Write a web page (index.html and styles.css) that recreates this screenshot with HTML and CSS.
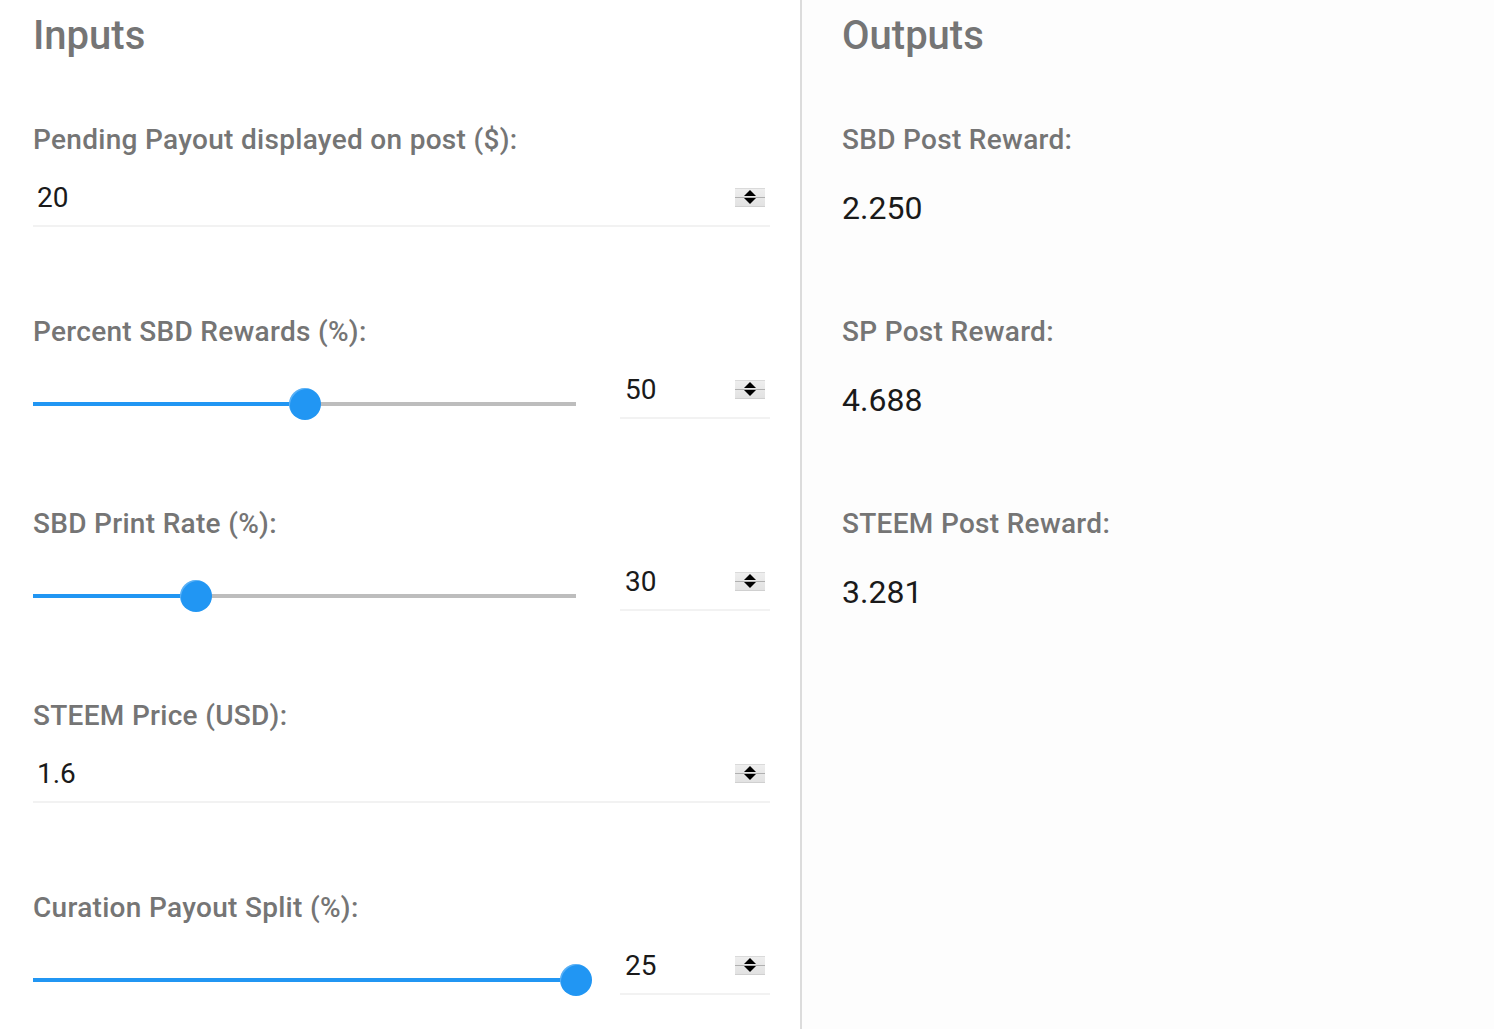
FILE: index.html
```html
<!DOCTYPE html>
<html>
<head>
<meta charset="utf-8">
<link rel="stylesheet" href="styles.css">
</head>
<body>
<div class="page">
  <section class="col inputs">
    <h2 class="heading">Inputs</h2>
    <div class="fields">
      <div class="field">
        <div class="label">Pending Payout displayed on post ($):</div>
        <div class="num wide"><span class="val">20</span><span class="spin"><i class="up"></i><i class="dn"></i></span></div>
      </div>

      <div class="field">
        <div class="label">Percent SBD Rewards (%):</div>
        <div class="ctrl">
          <div class="slider"><div class="track"><div class="fill" style="width:50%"></div></div><div class="thumb" style="left:50%"></div></div>
          <div class="num small"><span class="val">50</span><span class="spin"><i class="up"></i><i class="dn"></i></span></div>
        </div>
      </div>

      <div class="field">
        <div class="label">SBD Print Rate (%):</div>
        <div class="ctrl">
          <div class="slider"><div class="track"><div class="fill" style="width:30%"></div></div><div class="thumb" style="left:30%"></div></div>
          <div class="num small"><span class="val">30</span><span class="spin"><i class="up"></i><i class="dn"></i></span></div>
        </div>
      </div>

      <div class="field">
        <div class="label">STEEM Price (USD):</div>
        <div class="num wide"><span class="val">1.6</span><span class="spin"><i class="up"></i><i class="dn"></i></span></div>
      </div>

      <div class="field">
        <div class="label">Curation Payout Split (%):</div>
        <div class="ctrl">
          <div class="slider"><div class="track"><div class="fill" style="width:100%"></div></div><div class="thumb" style="left:100%"></div></div>
          <div class="num small"><span class="val">25</span><span class="spin"><i class="up"></i><i class="dn"></i></span></div>
        </div>
      </div>
    </div>
  </section>

  <section class="col outputs">
    <h2 class="heading">Outputs</h2>
    <div class="fields">
      <div class="field">
        <div class="label">SBD Post Reward:</div>
        <div class="out">2.250</div>
      </div>
      <div class="field">
        <div class="label">SP Post Reward:</div>
        <div class="out">4.688</div>
      </div>
      <div class="field">
        <div class="label">STEEM Post Reward:</div>
        <div class="out">3.281</div>
      </div>
    </div>
  </section>
</div>
</body>
</html>
```

FILE: styles.css
```css
html, body {
  margin: 0;
  padding: 0;
  background: #ffffff;
  font-family: Roboto, "Liberation Sans", sans-serif;
}

.page {
  display: grid;
  grid-template-columns: 802px 1fr;
  height: 1029px;
}

.col {
  display: flex;
  flex-direction: column;
}

.inputs {
  padding: 0 30px 0 33px;
  border-right: 2px solid #dcdcdc;
}

.outputs {
  padding: 0 0 0 40px;
  background: #fdfdfd;
}

.heading {
  margin: 12px 0 0;
  font-size: 40px;
  line-height: 48px;
  font-weight: 500;
  color: #757575;
}

.fields {
  display: flex;
  flex-direction: column;
  gap: 86px;
  padding-top: 62px;
}

.field {
  height: 106px;
  flex: none;
  display: flex;
  flex-direction: column;
}

.label {
  font-size: 28px;
  line-height: 36px;
  font-weight: 500;
  letter-spacing: 0.3px;
  color: #757575;
}

.ctrl {
  display: flex;
  align-items: flex-start;
  gap: 44px;
  margin-top: 12px;
}

.num {
  display: flex;
  align-items: center;
  justify-content: space-between;
  height: 57px;
  border-bottom: 2px solid #f2f2f2;
  box-sizing: border-box;
  padding: 0 5px 0 4px;
}

.num.wide {
  margin-top: 12px;
}

.num.small {
  width: 150px;
  flex: none;
  padding-left: 5px;
}

.val {
  font-size: 28px;
  color: #1a1a1a;
}

.spin {
  position: relative;
  width: 30px;
  height: 19px;
  background: linear-gradient(#eeeeee, #e2e2e2);
  border-top: 1px solid #dadada;
  border-bottom: 1px solid #d0d0d0;
  box-sizing: border-box;
}

.spin::after {
  content: "";
  position: absolute;
  left: 0;
  right: 0;
  top: 8px;
  height: 1px;
  background: #b0b0b0;
}

.spin .up,
.spin .dn {
  position: absolute;
  left: 9px;
  width: 0;
  height: 0;
  border-left: 6px solid transparent;
  border-right: 6px solid transparent;
  z-index: 1;
}

.spin .up {
  top: 1px;
  border-bottom: 6px solid #000;
}

.spin .dn {
  bottom: 2px;
  border-top: 6px solid #000;
}

.slider {
  position: relative;
  width: 543px;
  height: 34px;
  flex: none;
  margin-top: 25px;
  display: flex;
  align-items: center;
}

.track {
  width: 100%;
  height: 4px;
  background: #bdbdbd;
}

.fill {
  height: 100%;
  background: #2196f3;
}

.thumb {
  position: absolute;
  top: 50%;
  width: 32px;
  height: 32px;
  margin: -16px 0 0 -16px;
  border-radius: 50%;
  background: #2196f3;
  box-shadow: inset 2px 2px 0 -1px rgba(255,255,255,0.25);
}

.out {
  margin-top: 31px;
  font-size: 32px;
  color: #1a1a1a;
}
```
